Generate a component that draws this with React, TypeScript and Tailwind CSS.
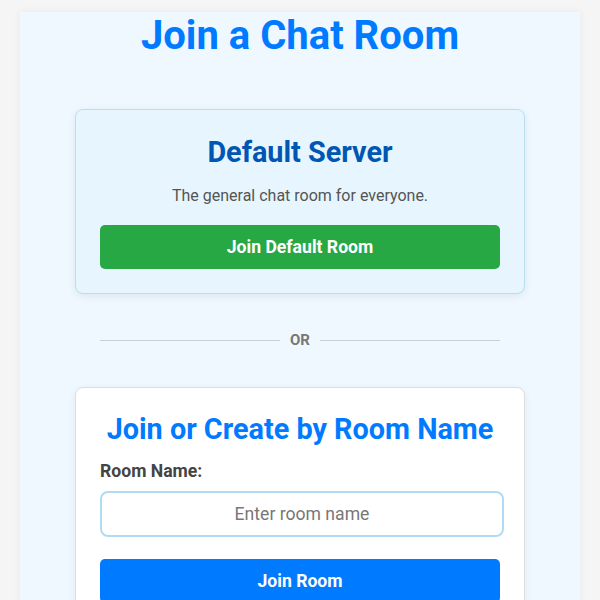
export default function App() {
  return (
    <div className="min-h-screen bg-[#f5f5f5] pt-[18px] font-['Roboto',sans-serif]">
      <div className="mx-auto w-[560px] min-h-[600px] bg-[#f0f8ff] shadow-[0_0_8px_rgba(0,0,0,0.05)]">
        <h1 className="-mt-[6px] text-center text-[40px] font-bold leading-[47px] text-[#007bff]">
          Join a Chat Room
        </h1>

        <div className="mx-auto mt-[50px] w-[450px] rounded-lg border border-[#b8def5] bg-[#e6f5fe] px-[24px] pt-[26px] pb-[24px] shadow-[0_2px_8px_rgba(0,0,0,0.08)]">
          <h2 className="text-center text-[28.8px] font-bold leading-[33px] text-[#0056b3]">
            Default Server
          </h2>
          <p className="mt-[15px] text-center text-base leading-6 text-[#555]">
            The general chat room for everyone.
          </p>
          <button className="mt-[17px] h-[44px] w-full rounded-[5px] bg-[#28a745] text-[17.6px] font-bold text-white">
            Join Default Room
          </button>
        </div>

        <div className="mx-auto mt-[37px] flex w-[400px] items-center gap-[10px]">
          <div className="h-px flex-1 bg-[#c8cfd6]" />
          <span className="text-[15px] font-bold leading-[18px] text-[#777]">OR</span>
          <div className="h-px flex-1 bg-[#c8cfd6]" />
        </div>

        <div className="mx-auto mt-[38px] w-[450px] rounded-lg border border-[#ddd] bg-white px-[24px] pt-[25px] pb-[25px] shadow-[0_2px_8px_rgba(0,0,0,0.06)]">
          <h2 className="text-center text-[28.8px] font-bold leading-[33px] text-[#007bff]">
            Join or Create by Room Name
          </h2>
          <label className="mt-[15px] block text-[17.6px] font-bold leading-[20px] text-[#444]">
            Room Name:
          </label>
          <input
            type="text"
            placeholder="Enter room name"
            className="mt-[10px] block h-[46px] w-[404px] rounded-lg border-2 border-[#b0dbf3] bg-white text-center text-[17.6px] text-[#333] outline-none placeholder:text-[#777]"
          />
          <button className="mt-[22px] h-[44px] w-full rounded-[5px] bg-[#007bff] text-[17.6px] font-bold text-white">
            Join Room
          </button>
        </div>
      </div>
    </div>
  );
}
